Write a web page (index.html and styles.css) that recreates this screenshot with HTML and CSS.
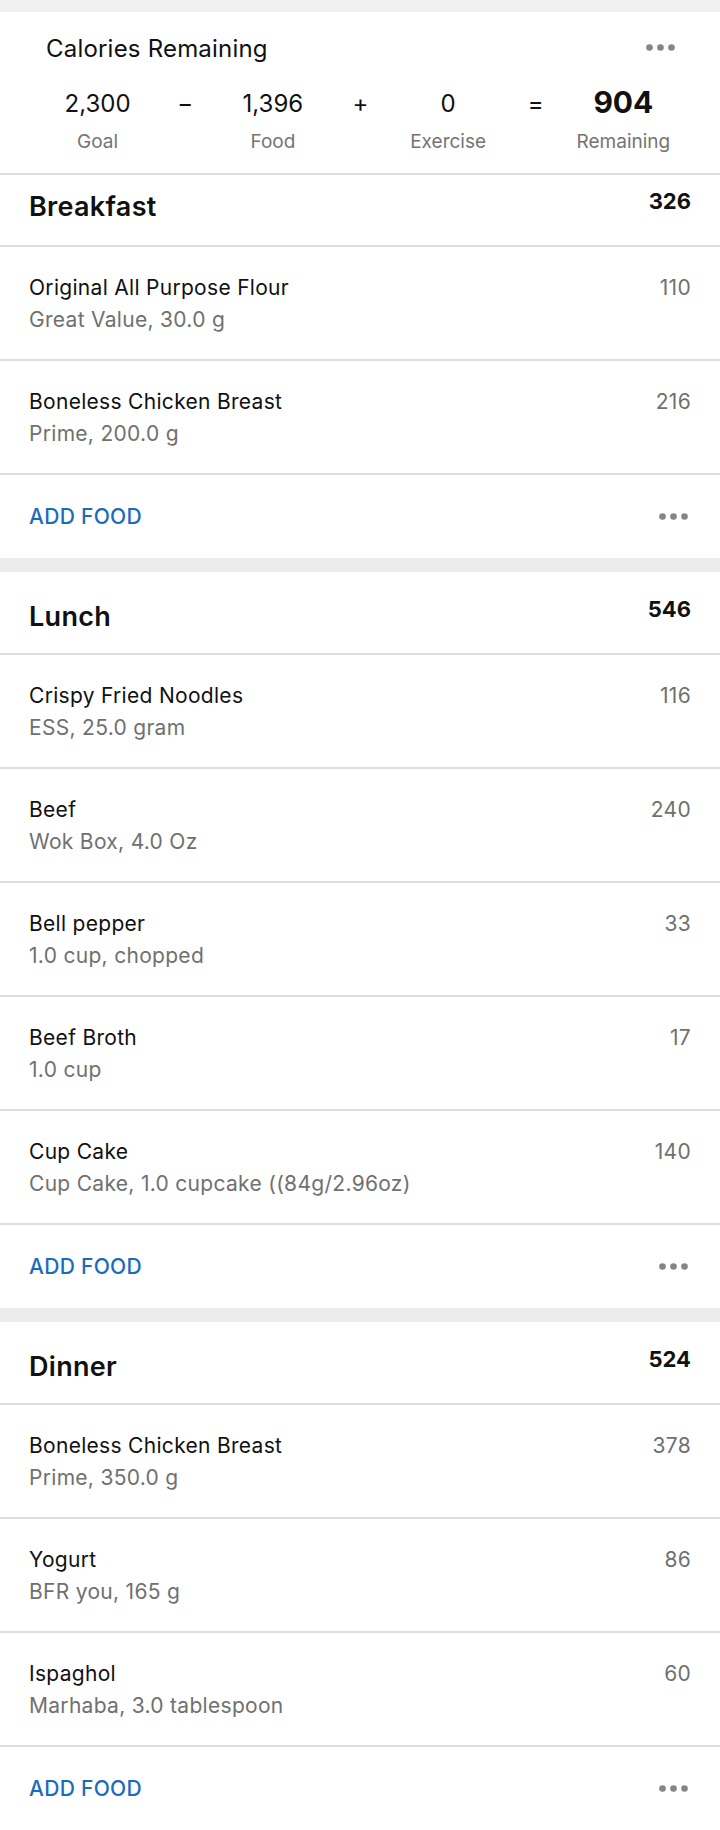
FILE: index.html
```html
<!DOCTYPE html>
<html lang="en">
<head>
    <meta charset="UTF-8">
    <meta name="viewport" content="width=device-width, initial-scale=1.0">
    <title>Diary</title>
    <link rel="stylesheet" href="styles.css">
</head>
<body>

    <div class="top-strip"></div>

    <!-- calories summary card -->
    <section class="summary">
        <div class="summary-head">
            <h2>Calories Remaining</h2>
            <svg class="dots" width="29" height="7" viewBox="0 0 29 7"><circle cx="3.5" cy="3.5" r="3.3"/><circle cx="14.5" cy="3.5" r="3.3"/><circle cx="25.5" cy="3.5" r="3.3"/></svg>
        </div>
        <div class="equation">
            <div class="term"><span class="value">2,300</span><span class="label">Goal</span></div>
            <div class="op">&minus;</div>
            <div class="term"><span class="value">1,396</span><span class="label">Food</span></div>
            <div class="op">+</div>
            <div class="term"><span class="value">0</span><span class="label">Exercise</span></div>
            <div class="op">=</div>
            <div class="term"><span class="value total">904</span><span class="label">Remaining</span></div>
        </div>
    </section>

    <!-- Breakfast -->
    <section class="meal">
        <div class="meal-head first">
            <h3>Breakfast</h3>
            <span class="meal-cal">326</span>
        </div>
        <div class="food">
            <div class="food-info">
                <div class="food-name">Original All Purpose Flour</div>
                <div class="food-desc">Great Value, 30.0 g</div>
            </div>
            <span class="food-cal">110</span>
        </div>
        <div class="food">
            <div class="food-info">
                <div class="food-name">Boneless Chicken Breast</div>
                <div class="food-desc">Prime, 200.0 g</div>
            </div>
            <span class="food-cal">216</span>
        </div>
        <div class="meal-foot">
            <a href="#" class="add-food">ADD FOOD</a>
            <svg class="dots" width="29" height="7" viewBox="0 0 29 7"><circle cx="3.5" cy="3.5" r="3.3"/><circle cx="14.5" cy="3.5" r="3.3"/><circle cx="25.5" cy="3.5" r="3.3"/></svg>
        </div>
    </section>

    <!-- Lunch -->
    <section class="meal">
        <div class="meal-head">
            <h3>Lunch</h3>
            <span class="meal-cal">546</span>
        </div>
        <div class="food">
            <div class="food-info">
                <div class="food-name">Crispy Fried Noodles</div>
                <div class="food-desc">ESS, 25.0 gram</div>
            </div>
            <span class="food-cal">116</span>
        </div>
        <div class="food">
            <div class="food-info">
                <div class="food-name">Beef</div>
                <div class="food-desc">Wok Box, 4.0 Oz</div>
            </div>
            <span class="food-cal">240</span>
        </div>
        <div class="food">
            <div class="food-info">
                <div class="food-name">Bell pepper</div>
                <div class="food-desc">1.0 cup, chopped</div>
            </div>
            <span class="food-cal">33</span>
        </div>
        <div class="food">
            <div class="food-info">
                <div class="food-name">Beef Broth</div>
                <div class="food-desc">1.0 cup</div>
            </div>
            <span class="food-cal">17</span>
        </div>
        <div class="food">
            <div class="food-info">
                <div class="food-name">Cup Cake</div>
                <div class="food-desc">Cup Cake, 1.0 cupcake ((84g/2.96oz)</div>
            </div>
            <span class="food-cal">140</span>
        </div>
        <div class="meal-foot">
            <a href="#" class="add-food">ADD FOOD</a>
            <svg class="dots" width="29" height="7" viewBox="0 0 29 7"><circle cx="3.5" cy="3.5" r="3.3"/><circle cx="14.5" cy="3.5" r="3.3"/><circle cx="25.5" cy="3.5" r="3.3"/></svg>
        </div>
    </section>

    <!-- Dinner -->
    <section class="meal">
        <div class="meal-head">
            <h3>Dinner</h3>
            <span class="meal-cal">524</span>
        </div>
        <div class="food">
            <div class="food-info">
                <div class="food-name">Boneless Chicken Breast</div>
                <div class="food-desc">Prime, 350.0 g</div>
            </div>
            <span class="food-cal">378</span>
        </div>
        <div class="food">
            <div class="food-info">
                <div class="food-name">Yogurt</div>
                <div class="food-desc">BFR you, 165 g</div>
            </div>
            <span class="food-cal">86</span>
        </div>
        <div class="food">
            <div class="food-info">
                <div class="food-name">Ispaghol</div>
                <div class="food-desc">Marhaba, 3.0 tablespoon</div>
            </div>
            <span class="food-cal">60</span>
        </div>
        <div class="meal-foot">
            <a href="#" class="add-food">ADD FOOD</a>
            <svg class="dots" width="29" height="7" viewBox="0 0 29 7"><circle cx="3.5" cy="3.5" r="3.3"/><circle cx="14.5" cy="3.5" r="3.3"/><circle cx="25.5" cy="3.5" r="3.3"/></svg>
        </div>
    </section>

</body>
</html>
```

FILE: styles.css
```css
body {
    font-family: Inter, "Noto Sans", sans-serif;
    background-color: #ececee;
    color: #111;
    margin: 0;
}
.top-strip {
    height: 12px;
    background-color: #f1f1f1;
}
.summary {
    background-color: white;
    border-bottom: 2px solid #dedede;
    padding: 23px 45px 19px 46px;
}
.summary-head {
    display: flex;
    justify-content: space-between;
    align-items: center;
}
.summary-head h2 {
    font-size: 24px;
    font-weight: 400;
    letter-spacing: 0.2px;
    line-height: 28px;
    margin: 0;
}
.dots {
    fill: #858585;
    display: block;
}
.summary-head .dots {
    margin-top: -4px;
}
.equation {
    display: flex;
    margin: 26px -36px 0 -36px;
}
.term {
    flex: 1;
    display: flex;
    flex-direction: column;
    align-items: center;
}
.value {
    font-size: 24px;
    line-height: 30px;
}
.value.total {
    font-size: 30px;
    font-weight: 700;
    margin-top: -2px;
    margin-bottom: 2px;
}
.label {
    font-size: 19px;
    line-height: 24px;
    color: #747474;
    margin-top: 11px;
}
.op {
    width: 0;
    display: flex;
    justify-content: center;
    font-size: 24px;
    line-height: 30px;
}
.meal {
    background-color: white;
    margin-bottom: 14px;
}
.meal-head {
    display: flex;
    justify-content: space-between;
    align-items: flex-start;
    padding: 24px 29px 20px 29px;
    border-bottom: 2px solid #dedede;
}
.meal-head.first {
    padding-top: 11px;
    padding-bottom: 22px;
}
.meal-head.first .meal-cal {
    margin-top: 2px;
}
.meal-head h3 {
    font-size: 27px;
    font-weight: 600;
    letter-spacing: 0.3px;
    line-height: 32px;
    margin: 5px 0 0 0;
}
.meal-cal {
    font-size: 22px;
    font-weight: 700;
    line-height: 26px;
}
.food {
    display: flex;
    justify-content: space-between;
    align-items: flex-start;
    padding: 27px 29px 25px 29px;
    border-bottom: 2px solid #dedede;
}
.food-name {
    font-size: 21px;
    letter-spacing: 0.3px;
    line-height: 28px;
}
.food-desc {
    font-size: 21px;
    letter-spacing: 0.3px;
    line-height: 28px;
    color: #707070;
    margin-top: 4px;
}
.food-cal {
    font-size: 21px;
    letter-spacing: 0.3px;
    line-height: 28px;
    color: #707070;
}
.meal-foot {
    display: flex;
    justify-content: space-between;
    align-items: center;
    height: 83px;
    padding: 0 32px 0 29px;
}
.add-food {
    font-size: 21px;
    font-weight: 500;
    letter-spacing: 0.3px;
    color: #1b6bbd;
    text-decoration: none;
}
```
